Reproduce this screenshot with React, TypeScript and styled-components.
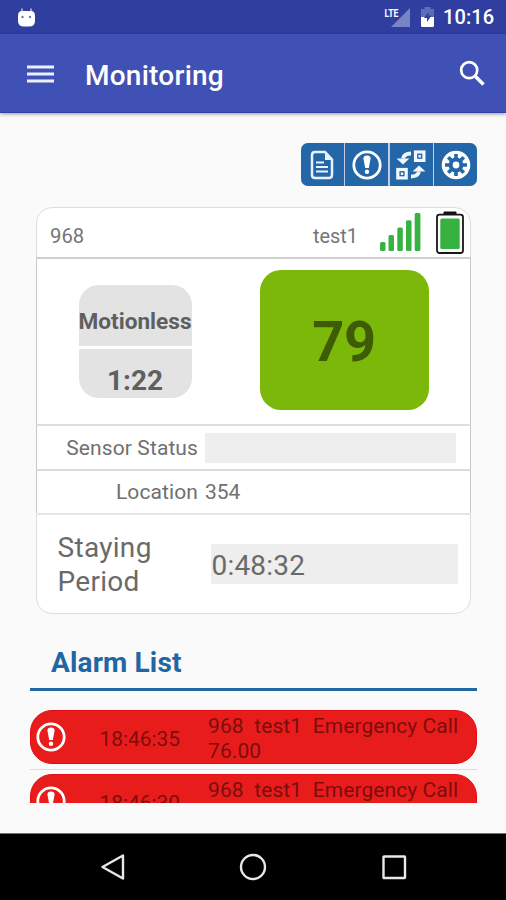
import React from "react";
import styled, { createGlobalStyle } from "styled-components";

const GlobalStyle = createGlobalStyle`
  * { box-sizing: border-box; }
  body { margin: 0; background: #fafafa; font-family: Roboto, "Liberation Sans", sans-serif; }
  svg { display: block; flex: none; }
`;

const Screen = styled.div`
  width: 506px;
  height: 900px;
  display: flex;
  flex-direction: column;
  background: #fafafa;
  overflow: hidden;
`;

const StatusBar = styled.div`
  height: 34px;
  flex: none;
  display: flex;
  align-items: center;
  justify-content: space-between;
  padding: 0 11px 0 17px;
  background: #303f9f;
  color: #fff;
`;

const StatusIcons = styled.div`
  display: flex;
  align-items: center;
`;

const Clock = styled.span`
  width: 52px;
  margin-left: 8px;
  font-size: 20px;
  font-weight: 500;
  line-height: 36px;
  letter-spacing: 0.1px;
  white-space: nowrap;
`;

const AppBar = styled.header`
  height: 79px;
  flex: none;
  display: flex;
  align-items: center;
  padding: 2px 20px 0 27px;
  background: #3f51b5;
  border-bottom: 1px solid #3040a5;
  box-shadow: 0 1px 4px rgba(0, 0, 0, 0.4);
`;

const Title = styled.h1`
  flex: 1;
  margin: 3px 0 0 31px;
  font-size: 28px;
  font-weight: 500;
  letter-spacing: 0.25px;
  line-height: 36px;
  color: #fff;
`;

const SearchSlot = styled.div`
  margin-bottom: 2px;
`;

const Content = styled.main`
  flex: 1;
  display: flex;
  flex-direction: column;
  padding: 30px 29px 0 30px;
`;

const Toolbar = styled.div`
  align-self: flex-end;
  display: grid;
  grid-template-columns: repeat(4, 1fr);
  gap: 1.5px;
  width: 176px;
  height: 43px;
  border-radius: 7px;
  overflow: hidden;
  background: #c3cbe4;
`;

const ToolButton = styled.button`
  display: flex;
  align-items: center;
  justify-content: center;
  border: 0;
  padding: 0;
  background: #2467a9;
`;

const Card = styled.section`
  width: 435px;
  height: 407px;
  margin: 21px 0 0 6px;
  display: flex;
  flex-direction: column;
  border: 1px solid #dedede;
  border-radius: 16px;
  background: #fff;
`;

const CardHeader = styled.div`
  height: 49px;
  display: flex;
  align-items: center;
  padding: 0 6px 0 13px;
  font-size: 20.3px;
  color: #757575;
`;

const SensorId = styled.span`
  flex: 1;
  padding-top: 7px;
`;

const SensorName = styled.span`
  padding-top: 7px;
  margin-right: 21px;
  font-size: 19.900px;
`;

const CardRow = styled.div<{ $height: number; $line: string }>`
  height: ${(p) => p.$height}px;
  margin: 0 -1px;
  display: flex;
  align-items: center;
  border: solid #c8c8c8;
  border-width: 2px 1px 0;
  border-top-color: ${(p) => p.$line};
`;

const StatusTile = styled.div`
  width: 113px;
  height: 113px;
  margin: 0 0 0 41.500px;
  display: grid;
  grid-template-rows: 61px 49px;
  gap: 3px;
  border-radius: 20px;
  overflow: hidden;
`;

const TileCell = styled.div<{ $size: number; $pad: number }>`
  display: flex;
  align-items: center;
  justify-content: center;
  padding-top: ${(p) => p.$pad}px;
  background: #e3e3e3;
  color: #5f5f5f;
  font-weight: 700;
  font-size: ${(p) => p.$size}px;
  line-height: 1.2;
`;

const ScoreTile = styled.div`
  width: 169px;
  height: 140px;
  margin: 0 0 3px 68px;
  display: flex;
  align-items: center;
  justify-content: center;
  padding-top: 4px;
  border-radius: 21px;
  background: #7cb80a;
  color: #3e5c05;
  font-size: 56px;
  font-weight: 700;
  letter-spacing: -0.5px;
`;

const RowLabel = styled.span`
  width: 161px;
  text-align: right;
  font-size: 21px;
  letter-spacing: 0.1px;
  color: #707070;
  white-space: nowrap;
`;

const RowValue = styled.span<{ $filled?: boolean }>`
  width: 251px;
  height: 30px;
  margin-left: 7px;
  line-height: 31px;
  font-size: 21px;
  color: #707070;
  background: ${(p) => (p.$filled ? "#eeeeee" : "transparent")};
`;

const StayRow = styled.div`
  flex: 1;
  margin: 0 -1px;
  display: flex;
  align-items: center;
  border-top: 2px solid #e6e6e6;
  font-size: 28px;
  line-height: 33.5px;
  color: #6a6a6a;
`;

const StayLabel = styled.span`
  width: 110px;
  margin: 1px 0 0 21.500px;
  letter-spacing: 0.3px;
`;

const StayValue = styled.span`
  width: 247px;
  height: 40px;
  margin-left: 43px;
  padding-left: 1px;
  line-height: 43px;
  letter-spacing: 0.2px;
  background: #eeeeee;
`;

const SectionTitle = styled.h2`
  height: 77px;
  margin: 0;
  padding: 31px 0 0 21px;
  border-bottom: 3px solid #1f66a5;
  font-size: 28px;
  font-weight: 700;
  letter-spacing: 0.15px;
  line-height: 36px;
  color: #1f66a5;
`;

const AlarmList = styled.div`
  height: 93px;
  margin-top: 19px;
  overflow: hidden;
`;

const AlarmItem = styled.div`
  height: 64px;
`;

const AlarmPill = styled.div`
  height: 54px;
  display: flex;
  align-items: center;
  padding-left: 5px;
  border: 1px solid #e30c10;
  border-radius: 22px;
  background: #e91c1c;
  color: #7c0d0d;
  font-size: 21px;
`;

const AlarmRule = styled.div`
  height: 1px;
  margin-top: 5px;
  background: #dcdcdc;
`;

const AlarmTime = styled.span`
  width: 82px;
  margin-left: 33.500px;
  padding-top: 3px;
  font-size: 20.900px;
`;

const AlarmText = styled.span`
  margin-left: 26.500px;
  padding-top: 3px;
  line-height: 25px;
  letter-spacing: 0.08px;
  white-space: pre;
`;

const NavBar = styled.nav`
  height: 67px;
  flex: none;
  display: flex;
  align-items: center;
  justify-content: space-between;
  padding: 0 98px 1px;
  border-top: 1px solid #707070;
  background: #000;
`;

const AndroidHead = () => (
  <svg width="19" height="21" viewBox="0 0 19 21">
    <path d="M5 1.500v5M14 1.500v5" stroke="#aeb7e5" strokeWidth="1.600" />
    <path d="M1 9q0-5 4-5h9q4 0 4 5v5q0 5.500-6 5.500H7q-6 0-6-5.500z" fill="#fff" />
    <circle cx="5.500" cy="10" r="1.200" fill="#6a77bd" />
    <circle cx="13" cy="10" r="1.200" fill="#6a77bd" />
  </svg>
);

const LteText = styled.text`
  font: 700 10.500px Roboto, sans-serif;
  fill: #fff;
`;

const Signal = () => (
  <svg width="27" height="22" viewBox="0 0 27 22">
    <path d="M26 2v19H7z" fill="#7984c8" />
    <LteText x="0.500" y="10.500" textLength="14" lengthAdjust="spacingAndGlyphs">LTE</LteText>
  </svg>
);

const ChargingBattery = () => (
  <svg width="15" height="22" viewBox="0 0 15 22">
    <path d="M4.500 1h6v2H14v9H1V3h3.500z" fill="#5f6cb8" />
    <path d="M1 11h13v8.500q0 1.500-1.500 1.500h-10Q1 21 1 19.500z" fill="#fff" />
    <path d="M8.500 6L4 12h3V16l4.500-6.500h-3z" fill="#303f9f" />
  </svg>
);

const StatusBattery = styled.div`
  margin-left: 9px;
`;

const MenuIcon = () => (
  <svg width="27" height="20" viewBox="0 0 27 20">
    <path d="M0 3h27M0 10h27M0 17h27" stroke="#eef0ff" strokeWidth="3" />
  </svg>
);

const SearchIcon = () => (
  <svg width="27" height="27" viewBox="0 0 27 27">
    <circle cx="10.200" cy="10.200" r="8" fill="none" stroke="#fff" strokeWidth="2.700" />
    <path d="M16 16l8.500 8.500" stroke="#fff" strokeWidth="3.600" />
  </svg>
);

const DocumentIcon = () => (
  <svg width="24" height="30" viewBox="0 0 24 30">
    <path d="M5 2h10l7 7.500V25q0 3-3 3H5q-3 0-3-3V5q0-3 3-3z" fill="none" stroke="#e8f2fc" strokeWidth="2.500" />
    <path d="M15 2v8h7z" fill="#e8f2fc" />
    <path d="M6 12.500h8M6 17h12M6 21.500h12" stroke="#e8f2fc" strokeWidth="2.100" />
  </svg>
);

const AlertIcon = () => (
  <svg width="30" height="30" viewBox="0 0 30 30">
    <circle cx="15" cy="15" r="13.200" fill="none" stroke="#fff" strokeWidth="2.800" />
    <path d="M11.400 8.500q0-3 3.600-3t3.600 3L16.800 18h-3.600z" fill="#fff" />
    <circle cx="15" cy="21.700" r="2.200" fill="#fff" />
  </svg>
);

const TransferIcon = () => (
  <svg width="30" height="30" viewBox="0 0 30 30" fill="none" stroke="#f2f7fc">
    <rect x="19.500" y="2" width="8.400" height="8.400" strokeWidth="3.200" />
    <rect x="1.800" y="19.500" width="8.400" height="8.400" strokeWidth="3.200" />
    <path d="M22.500 5h2.400v2.400h-2.400zM4.800 22.500h2.400v2.400H4.800z" fill="#f2f7fc" stroke="none" />
    <path d="M15 3.500q-7 0-8 5" strokeWidth="3.800" />
    <path d="M0.500 8.500h13L7 14.500z" fill="#f2f7fc" stroke="none" />
    <path d="M15 26.500q7 0 8-5" strokeWidth="3.800" />
    <path d="M16.500 21.500h13L23 15.500z" fill="#f2f7fc" stroke="none" />
  </svg>
);

const GearIcon = () => (
  <svg width="30" height="30" viewBox="0 0 30 30">
    <circle cx="15" cy="15" r="14.300" fill="#fff" />
    <g stroke="#2467a9" strokeWidth="3.600">
      {[0, 45, 90, 135].map((angle) => (
        <path key={angle} d="M15 4v22" transform={`rotate(${angle} 15 15)`} />
      ))}
    </g>
    <circle cx="15" cy="15" r="7.400" fill="#2467a9" />
    <circle cx="15" cy="15" r="3.400" fill="#fff" />
  </svg>
);

const SignalBars = () => (
  <svg width="43" height="43" viewBox="0 0 43 43" fill="#35b23f">
    <rect x="1" y="31" width="5.500" height="9" rx="1.500" />
    <rect x="9.500" y="24" width="5.500" height="16" rx="1.500" />
    <rect x="18.300" y="16.500" width="5.500" height="23.500" rx="1.500" />
    <rect x="27" y="9.200" width="5.500" height="30.800" rx="1.500" />
    <rect x="35.700" y="2" width="5.700" height="38" rx="1.500" />
  </svg>
);

const BatterySlot = styled.div`
  margin-left: 14px;
`;

const Battery = () => (
  <svg width="28" height="44" viewBox="0 0 28 44">
    <rect x="7.500" y="0.500" width="13" height="4" rx="1" fill="#111" />
    <rect x="1" y="3.700" width="26" height="38.300" rx="2.500" fill="#fff" stroke="#171717" strokeWidth="1.800" />
    <rect x="4.300" y="7.500" width="19.400" height="30.500" rx="1.500" fill="#35b23f" />
  </svg>
);

const alarms = [
  { time: "18:46:35", text: "968  test1  Emergency Call\n76.00" },
  { time: "18:46:30", text: "968  test1  Emergency Call\n76.00" },
];

export default function App() {
  return (
    <>
      <GlobalStyle />
      <Screen>
        <StatusBar>
          <AndroidHead />
          <StatusIcons>
            <Signal />
            <StatusBattery><ChargingBattery /></StatusBattery>
            <Clock>10:16</Clock>
          </StatusIcons>
        </StatusBar>
        <AppBar>
          <MenuIcon />
          <Title>Monitoring</Title>
          <SearchSlot><SearchIcon /></SearchSlot>
        </AppBar>
        <Content>
          <Toolbar>
            <ToolButton aria-label="Report"><DocumentIcon /></ToolButton>
            <ToolButton aria-label="Alarms"><AlertIcon /></ToolButton>
            <ToolButton aria-label="Transfer"><TransferIcon /></ToolButton>
            <ToolButton aria-label="Settings"><GearIcon /></ToolButton>
          </Toolbar>
          <Card>
            <CardHeader>
              <SensorId>968</SensorId>
              <SensorName>test1</SensorName>
              <SignalBars />
              <BatterySlot><Battery /></BatterySlot>
            </CardHeader>
            <CardRow $height={167} $line="#cfcfcf">
              <StatusTile>
                <TileCell $size={22.6} $pad={12}>Motionless</TileCell>
                <TileCell $size={28} $pad={14}>1:22</TileCell>
              </StatusTile>
              <ScoreTile>79</ScoreTile>
            </CardRow>
            <CardRow $height={45} $line="#dedede">
              <RowLabel>Sensor Status</RowLabel>
              <RowValue $filled />
            </CardRow>
            <CardRow $height={44} $line="#dadcdc">
              <RowLabel>Location</RowLabel>
              <RowValue>354</RowValue>
            </CardRow>
            <StayRow>
              <StayLabel>Staying Period</StayLabel>
              <StayValue>0:48:32</StayValue>
            </StayRow>
          </Card>
          <SectionTitle>Alarm List</SectionTitle>
          <AlarmList>
            {alarms.map((alarm) => (
              <AlarmItem key={alarm.time}>
                <AlarmPill>
                  <AlertIcon />
                  <AlarmTime>{alarm.time}</AlarmTime>
                  <AlarmText>{alarm.text}</AlarmText>
                </AlarmPill>
                <AlarmRule />
              </AlarmItem>
            ))}
          </AlarmList>
        </Content>
        <NavBar>
          <svg width="28" height="30" viewBox="0 0 28 30">
            <path d="M25 3.500v23L4.500 15z" fill="none" stroke="#e8e8e8" strokeWidth="2.400" strokeLinejoin="round" />
          </svg>
          <svg width="28" height="28" viewBox="0 0 28 28">
            <circle cx="14" cy="14" r="12" fill="none" stroke="#e8e8e8" strokeWidth="2.400" />
          </svg>
          <svg width="28" height="28" viewBox="0 0 28 28">
            <rect x="3.500" y="3.500" width="21.500" height="21.500" rx="0.500" fill="none" stroke="#e8e8e8" strokeWidth="2.400" />
          </svg>
        </NavBar>
      </Screen>
    </>
  );
}
